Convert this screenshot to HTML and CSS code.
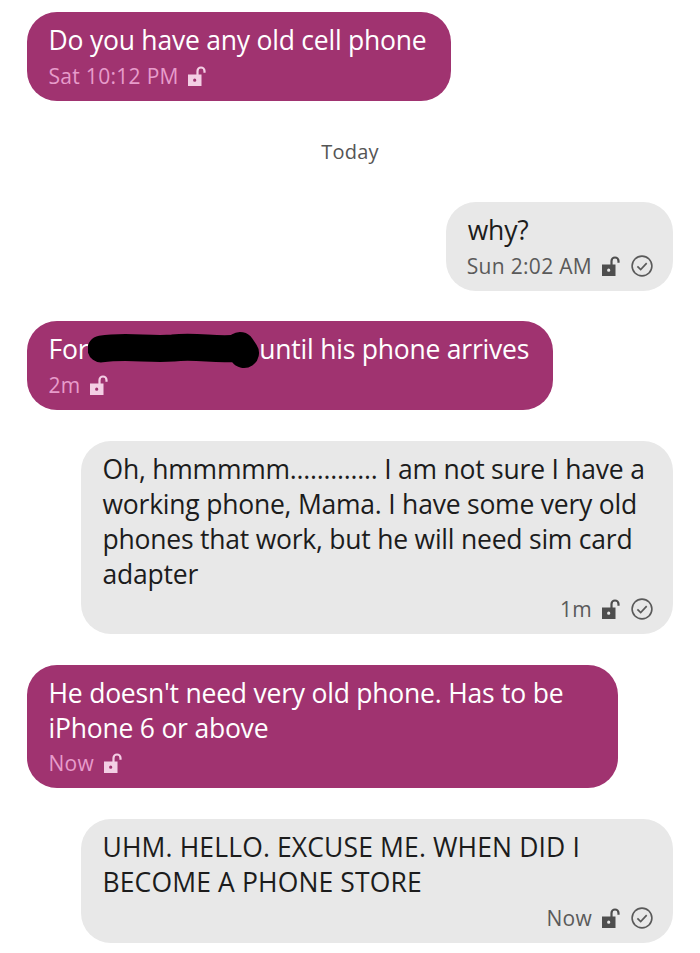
FILE: index.html
```html
<!DOCTYPE html>
<html lang="en">
<head>
<meta charset="utf-8">
<title>Messages</title>
<link rel="stylesheet" href="styles.css">
</head>
<body>
<svg class="defs" width="0" height="0" aria-hidden="true">
  <symbol id="lock" viewBox="0 0 19 20">
    <path fill="currentColor" fill-rule="evenodd" d="M1 8.5h13.5V20H1zM7.7 12.6a1.6 1.6 0 1 0 0 3.2 1.6 1.6 0 0 0 0-3.2z"/>
    <path fill="none" stroke="currentColor" stroke-width="2.2" d="M10.5 9V5a3.5 3.5 0 0 1 7 0v1.8"/>
  </symbol>
  <symbol id="check" viewBox="0 0 22 22">
    <circle cx="11" cy="11" r="9.9" fill="none" stroke="currentColor" stroke-width="1.6"/>
    <path fill="none" stroke="currentColor" stroke-width="1.7" d="M6.4 11.3l3.3 3.2 6-6.3"/>
  </symbol>
</svg>
<main class="thread">
  <div class="bubble in">
    <p class="text">Do you have any old cell phone</p>
    <div class="meta"><span>Sat 10:12 PM</span><svg class="lock"><use href="#lock"/></svg></div>
  </div>
  <div class="day">Today</div>
  <div class="bubble out">
    <p class="text">why?</p>
    <div class="meta"><span>Sun 2:02 AM</span><svg class="lock"><use href="#lock"/></svg><svg class="check"><use href="#check"/></svg></div>
  </div>
  <div class="bubble in">
    <p class="text">For<span class="redact"><svg class="scribble" viewBox="0 0 172 40"><path d="M13 19C40 15 60 20 85 18C110 15 128 21 150 18" fill="none" stroke="#000" stroke-width="27" stroke-linecap="round"/><path d="M152 17L156 23" fill="none" stroke="#000" stroke-width="30" stroke-linecap="round"/></svg></span>until his phone arrives</p>
    <div class="meta"><span>2m</span><svg class="lock"><use href="#lock"/></svg></div>
  </div>
  <div class="bubble out">
    <p class="text">Oh, hmmmmm............. I am not sure I have a working phone, Mama. I have some very old phones that work, but he will need sim card adapter</p>
    <div class="meta"><span>1m</span><svg class="lock"><use href="#lock"/></svg><svg class="check"><use href="#check"/></svg></div>
  </div>
  <div class="bubble in">
    <p class="text">He doesn't need very old phone. Has to be iPhone 6 or above</p>
    <div class="meta"><span>Now</span><svg class="lock"><use href="#lock"/></svg></div>
  </div>
  <div class="bubble out">
    <p class="text caps">UHM. HELLO. EXCUSE ME. WHEN DID I BECOME A PHONE STORE</p>
    <div class="meta"><span>Now</span><svg class="lock"><use href="#lock"/></svg><svg class="check"><use href="#check"/></svg></div>
  </div>
</main>
</body>
</html>
```
FILE: styles.css
```css
* { box-sizing: border-box; }
html, body { margin: 0; background: #fff; }
body { font-family: "Open Sans", "Noto Sans", sans-serif; height: 953px; overflow: hidden; }
.defs { position: absolute; }
.thread { display: flex; flex-direction: column; gap: 30.8px; padding: 12px 27px 0; }
.bubble { width: fit-content; max-width: 592px; border-radius: 30px; padding: 11px 20px 9.5px 20.5px; }
.in { align-self: flex-start; background: #a03370; color: #fff; max-width: 591px; padding-left: 21.5px; padding-right: 24px; }
.out { align-self: flex-end; background: #e8e8e8; color: #1c1c1c; }
.out .text { padding-left: 1px; }
.text { margin: 0; font-size: 26.5px; line-height: 35px; letter-spacing: -0.22px; }
.text.caps { letter-spacing: 0.13px; }
.meta { display: flex; align-items: center; height: 33px; padding-top: 2px; font-size: 21px; letter-spacing: 0.3px; }
.in .meta { color: #e79ccb; }
.out .meta { color: #5a5a5a; justify-content: flex-end; }
.lock { width: 19px; height: 20px; margin-left: 9px; }
.in .lock { color: #f3cfe4; margin-left: 8.5px; }
.out .lock { color: #4e4e4e; }
.check { width: 22px; height: 22px; margin-left: 11px; }
.day { align-self: center; font-size: 20px; line-height: 28px; color: #555; margin: 7px 0 5px; letter-spacing: 0.2px; }
.redact { position: relative; display: inline-block; width: 171px; height: 1px; }
.scribble { position: absolute; left: 0; top: -28px; width: 172px; height: 40px; }
```
